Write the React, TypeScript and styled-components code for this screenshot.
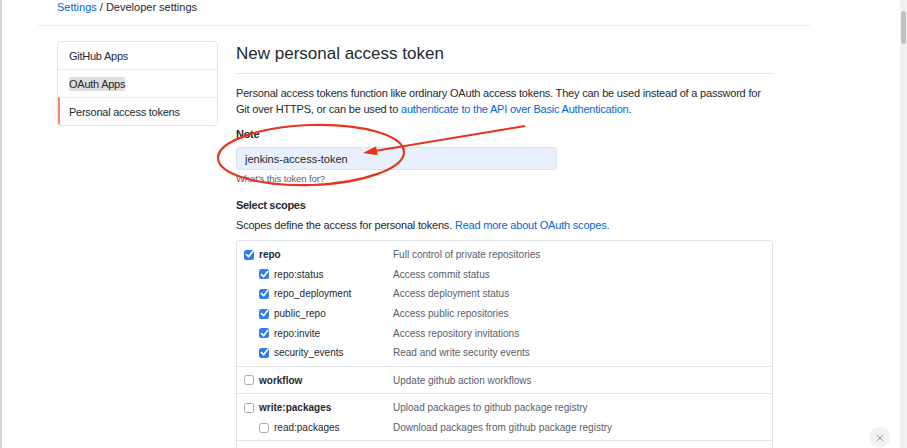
import React from "react";
import styled, { createGlobalStyle } from "styled-components";
import { X } from "lucide-react";

const Global = createGlobalStyle`
  html, body {
    margin: 0;
    padding: 0;
    height: 448px;
    overflow: hidden;
    background: #fff;
  }
  body {
    font-family: "Liberation Sans", Arial, sans-serif;
    color: #24292e;
  }
  * { box-sizing: border-box; }
`;

const Page = styled.div`
  display: flex;
  height: 448px;
  border-left: 2px solid #d6d6d6;
`;

const Main = styled.div`
  flex: 1;
  min-width: 0;
  overflow: hidden;
`;

const ScrollTrack = styled.div`
  width: 7px;
  background: #f0f0f0;
  display: flex;
  flex-direction: column;
  align-items: center;
`;

const ScrollThumb = styled.div`
  margin-top: 11px;
  width: 5px;
  height: 33px;
  border-radius: 3px;
  background: #c1c1c1;
`;

const Container = styled.div`
  margin-left: 36px;
  width: 772px;
`;

const Breadcrumb = styled.div`
  height: 26px;
  padding: 0 19px;
  font-size: 11px;
  line-height: 14px;
  border-bottom: 1px solid #eaecef;
`;

const Link = styled.a`
  color: #0366d6;
  text-decoration: none;
`;

const Layout = styled.div`
  display: flex;
  gap: 18px;
  padding: 15px 19px 0;
  align-items: flex-start;
`;

const SideNav = styled.nav`
  width: 161px;
  border: 1px solid #e1e4e8;
  border-radius: 4px;
  overflow: hidden;
`;

const NavItem = styled.div<{ $selected?: boolean }>`
  height: 27px;
  display: flex;
  align-items: center;
  font-size: 11px;
  letter-spacing: -0.25px;
  padding-left: ${(p) => (p.$selected ? 9 : 11)}px;
  border-left: ${(p) => (p.$selected ? "2px solid #f9826c" : "none")};
  & + & {
    border-top: 1px solid #eaecef;
    height: 28px;
  }
`;

const Highlight = styled.span`
  background: #dedede;
  padding: 1px 0;
`;

const Content = styled.div`
  width: 537px;
`;

const Title = styled.h2`
  margin: 0;
  font-size: 17px;
  font-weight: 400;
  line-height: 26px;
  padding-bottom: 6px;
  border-bottom: 1px solid #e1e4e8;
`;

const Lead = styled.p`
  margin: 11px 0 0;
  font-size: 11px;
  line-height: 16px;
  letter-spacing: -0.2px;
`;

const FieldLabel = styled.div<{ $gap: number }>`
  margin-top: ${(p) => p.$gap}px;
  font-size: 11px;
  font-weight: 700;
  line-height: 16px;
  letter-spacing: -0.3px;
`;

const TextInput = styled.input`
  display: block;
  margin-top: 5px;
  width: 321px;
  height: 23px;
  padding: 0 8px;
  border: 1px solid #dde3ea;
  border-radius: 3px;
  background: #e8f0fe;
  font-family: "Liberation Sans", Arial, sans-serif;
  font-size: 11px;
  color: #24292e;
  outline: none;
`;

const Hint = styled.div`
  margin-top: 2px;
  font-size: 9.5px;
  letter-spacing: -0.1px;
  line-height: 14px;
  color: #586069;
`;

const Text = styled.div`
  margin-top: 4px;
  font-size: 11px;
  line-height: 16px;
  letter-spacing: -0.2px;
`;

const ScopeBox = styled.div`
  margin-top: 7px;
  border: 1px solid #e1e4e8;
  border-radius: 3px;
`;

const ScopeGroup = styled.div`
  padding: 4px 0 3px;
  & + & {
    border-top: 1px solid #e1e4e8;
  }
`;

const ScopeRow = styled.div`
  display: grid;
  grid-template-columns: 149px 1fr;
  align-items: center;
  height: 19.6px;
  padding-left: 7px;
  font-size: 10px;
`;

const ScopeName = styled.div<{ $sub?: boolean }>`
  display: flex;
  align-items: center;
  gap: 5px;
  padding-left: ${(p) => (p.$sub ? 15 : 0)}px;
`;

const NameText = styled.span<{ $bold?: boolean }>`
  font-weight: ${(p) => (p.$bold ? 700 : 400)};
  color: #24292e;
`;

const ScopeDesc = styled.div`
  color: #586069;
`;

const Box = styled.span<{ $checked?: boolean }>`
  width: 10px;
  height: 10px;
  flex: none;
  border-radius: 2.5px;
  display: inline-flex;
  align-items: center;
  justify-content: center;
  background: ${(p) => (p.$checked ? "#2f7bf5" : "#fff")};
  border: ${(p) => (p.$checked ? "none" : "1px solid #a9a9a9")};
`;

const CloseButton = styled.div`
  position: fixed;
  left: 869px;
  top: 427px;
  width: 21px;
  height: 21px;
  border-radius: 50%;
  background: #f2f2f5;
  display: flex;
  align-items: center;
  justify-content: center;
  color: #7d7d8a;
`;

const Annotation = styled.svg`
  position: fixed;
  left: 0;
  top: 0;
  pointer-events: none;
`;

function Checkbox({ checked }: { checked?: boolean }) {
  return (
    <Box $checked={checked}>
      {checked && (
        <svg width="9" height="9" viewBox="0 0 8 8">
          <path d="M1.3 4.1 L3.2 6 L6.8 1.4" fill="none" stroke="#fff" strokeWidth="1.5" strokeLinecap="round" strokeLinejoin="round" />
        </svg>
      )}
    </Box>
  );
}

type Scope = { name: string; desc: string; checked?: boolean; sub?: boolean };

const groups: Scope[][] = [
  [
    { name: "repo", desc: "Full control of private repositories", checked: true },
    { name: "repo:status", desc: "Access commit status", checked: true, sub: true },
    { name: "repo_deployment", desc: "Access deployment status", checked: true, sub: true },
    { name: "public_repo", desc: "Access public repositories", checked: true, sub: true },
    { name: "repo:invite", desc: "Access repository invitations", checked: true, sub: true },
    { name: "security_events", desc: "Read and write security events", checked: true, sub: true },
  ],
  [{ name: "workflow", desc: "Update github action workflows" }],
  [
    { name: "write:packages", desc: "Upload packages to github package registry" },
    { name: "read:packages", desc: "Download packages from github package registry", sub: true },
  ],
  [{ name: "delete:packages", desc: "Delete packages from github package registry" }],
];

export default function App() {
  return (
    <>
      <Global />
      <Page>
        <Main>
          <Container>
            <Breadcrumb>
              <Link href="#">Settings</Link> / Developer settings
            </Breadcrumb>
            <Layout>
              <SideNav>
                <NavItem>GitHub Apps</NavItem>
                <NavItem>
                  <Highlight>OAuth Apps</Highlight>
                </NavItem>
                <NavItem $selected>Personal access tokens</NavItem>
              </SideNav>
              <Content>
                <Title>New personal access token</Title>
                <Lead>
                  Personal access tokens function like ordinary OAuth access tokens. They can be used instead of a
                  password for Git over HTTPS, or can be used to{" "}
                  <Link href="#">authenticate to the API over Basic Authentication</Link>.
                </Lead>
                <FieldLabel $gap={9}>Note</FieldLabel>
                <TextInput readOnly value="jenkins-access-token" />
                <Hint>What’s this token for?</Hint>
                <FieldLabel $gap={11}>Select scopes</FieldLabel>
                <Text>
                  Scopes define the access for personal tokens. <Link href="#">Read more about OAuth scopes.</Link>
                </Text>
                <ScopeBox>
                  {groups.map((g, gi) => (
                    <ScopeGroup key={gi}>
                      {g.map((s) => (
                        <ScopeRow key={s.name}>
                          <ScopeName $sub={s.sub}>
                            <Checkbox checked={s.checked} />
                            <NameText $bold={!s.sub}>{s.name}</NameText>
                          </ScopeName>
                          <ScopeDesc>{s.desc}</ScopeDesc>
                        </ScopeRow>
                      ))}
                    </ScopeGroup>
                  ))}
                </ScopeBox>
              </Content>
            </Layout>
          </Container>
        </Main>
        <ScrollTrack>
          <ScrollThumb />
        </ScrollTrack>
      </Page>
      <CloseButton>
        <X size={12} strokeWidth={1.6} />
      </CloseButton>
      <Annotation width="907" height="448" viewBox="0 0 907 448">
        <ellipse cx="311" cy="155" rx="93" ry="30" transform="rotate(-2 311 155)" fill="none" stroke="#e8341c" strokeWidth="2.2" />
        <line x1="525" y1="126" x2="376" y2="150.8" stroke="#e8341c" strokeWidth="2" />
        <polygon points="363,153 377.6,155.3 376.1,146.3" fill="#e8341c" />
      </Annotation>
    </>
  );
}
